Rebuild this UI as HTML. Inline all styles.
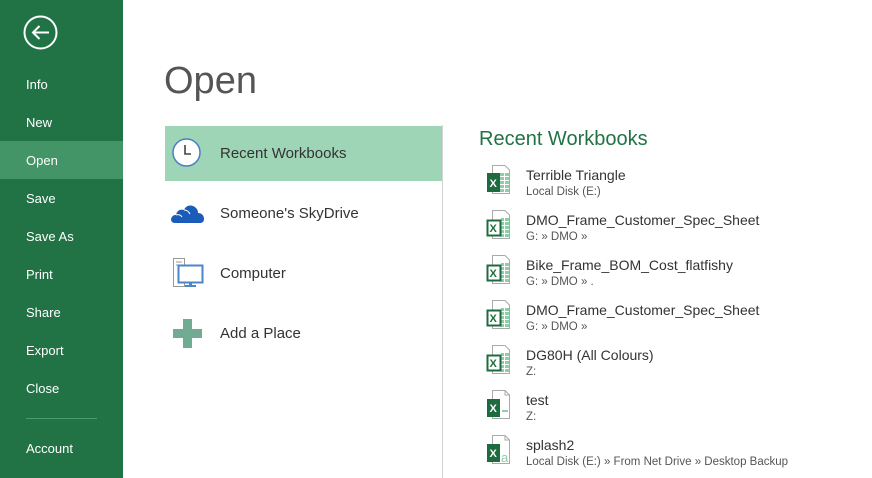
<!DOCTYPE html>
<html><head><meta charset="utf-8"><style>
*{margin:0;padding:0;box-sizing:border-box}
body{width:872px;height:478px;overflow:hidden;background:#fff;font-family:"Segoe UI","Liberation Sans",sans-serif;position:relative}
.side{position:absolute;left:0;top:0;width:123px;height:478px;background:#217346}
.mi{position:absolute;left:26px;color:#fff;font-size:13px;line-height:38px;height:38px}
.sel{position:absolute;left:0;top:141px;width:123px;height:38px;background:#439467}
.sep{position:absolute;left:26px;top:418px;width:71px;height:1px;background:#4d9a6e}
h1{position:absolute;left:164px;top:60px;font-size:38px;font-weight:normal;color:#555;}
.hl{position:absolute;left:165px;top:126px;width:277px;height:55px;background:#9fd5b7}
.vline{position:absolute;left:442px;top:125px;width:1px;height:353px;background:#d4d4d4}
.pl{position:absolute;left:220px;font-size:15px;color:#333}
.rh{position:absolute;left:479px;top:128px;font-size:20px;color:#217346}
.fn{position:absolute;left:526px;font-size:14px;color:#333;white-space:nowrap}
.fp{position:absolute;left:526px;font-size:11.5px;color:#555;white-space:nowrap}
.ic{position:absolute;left:486px}
</style></head><body>
<div class="side">
<svg style="position:absolute;left:23px;top:15px" width="36" height="36"><circle cx="17.5" cy="17.5" r="16" fill="none" stroke="#fff" stroke-width="2"/><path d="M10 17.5H26M16.5 11L10 17.5L16.5 24" fill="none" stroke="#fff" stroke-width="2"/></svg>
<div class="sel"></div>
<div class="mi" style="top:66px">Info</div>
<div class="mi" style="top:104px">New</div>
<div class="mi" style="top:142px">Open</div>
<div class="mi" style="top:180px">Save</div>
<div class="mi" style="top:218px">Save As</div>
<div class="mi" style="top:256px">Print</div>
<div class="mi" style="top:294px">Share</div>
<div class="mi" style="top:332px">Export</div>
<div class="mi" style="top:370px">Close</div>
<div class="sep"></div>
<div class="mi" style="top:430px">Account</div>
</div>
<h1>Open</h1>
<div class="hl"></div>
<div class="vline"></div>
<svg style="position:absolute;left:171px;top:138px" width="32" height="30"><circle cx="15.5" cy="14.5" r="13.5" fill="#fff" stroke="#4a7fc1" stroke-width="1.5"/><path d="M14 7V16H20" fill="none" stroke="#444" stroke-width="1.6"/></svg>
<div class="pl" style="top:145px">Recent Workbooks</div>
<svg style="position:absolute;left:170px;top:202px" width="35" height="22"><path d="M5 21C1 21 0 17 2 15C3 13 5 13 6 13C7 8 11 7 14 8C16 3 22 2 26 6C28 8 28 10 28 11C32 11 34 14 34 17C34 20 32 21 30 21Z" fill="#1a5cb8"/><path d="M6 13C8 12 11 13 12 15" fill="none" stroke="#fff" stroke-width="1"/><path d="M14 8C17 8 19 10 20 12" fill="none" stroke="#fff" stroke-width="1"/></svg>
<div class="pl" style="top:205px">Someone's SkyDrive</div>
<svg style="position:absolute;left:172px;top:257px" width="32" height="32"><rect x="1.5" y="1.5" width="11" height="28" fill="#fff" stroke="#999"/><path d="M4 5H10M4 8H10" stroke="#999"/><rect x="6.5" y="8.5" width="24" height="17" fill="#fff" stroke="#4a86c8" stroke-width="2"/><rect x="17" y="26" width="3" height="3" fill="#4a86c8"/><rect x="13" y="28" width="11" height="2" fill="#4a86c8"/></svg>
<div class="pl" style="top:265px">Computer</div>
<svg style="position:absolute;left:173px;top:319px" width="29" height="29"><path d="M10 0H19V10H29V19H19V29H10V19H0V10H10Z" fill="#72ab94"/></svg>
<div class="pl" style="top:325px">Add a Place</div>
<div class="rh">Recent Workbooks</div>

<svg class="ic" style="top:165px" width="26" height="30"><path d="M6.5 0.5H19L23.5 5V28.5H6.5Z" fill="#fff" stroke="#aaa"/><g fill="#8fcca8"><rect x="14" y="8" width="4" height="3"/><rect x="19" y="8" width="4" height="3"/><rect x="14" y="12" width="4" height="3"/><rect x="19" y="12" width="4" height="3"/><rect x="14" y="16" width="4" height="3"/><rect x="19" y="16" width="4" height="3"/><rect x="14" y="20" width="4" height="3"/><rect x="19" y="20" width="4" height="3"/><rect x="14" y="24" width="4" height="3"/><rect x="19" y="24" width="4" height="3"/></g><rect x="1" y="8" width="13" height="19" fill="#1d6b3e"/><text x="3.5" y="22" font-family="Liberation Sans" font-weight="bold" font-size="11" fill="#fff">X</text></svg>
<div class="fn" style="top:167px">Terrible Triangle</div><div class="fp" style="top:186px">Local Disk (E:)</div>

<svg class="ic" style="top:210px" width="26" height="30"><path d="M6.5 0.5H19L23.5 5V28.5H6.5Z" fill="#fff" stroke="#aaa"/><g fill="#8fcca8"><rect x="15" y="8" width="3" height="3"/><rect x="19" y="8" width="4" height="3"/><rect x="15" y="12" width="3" height="3"/><rect x="19" y="12" width="4" height="3"/><rect x="15" y="16" width="3" height="3"/><rect x="19" y="16" width="4" height="3"/><rect x="15" y="20" width="3" height="3"/><rect x="19" y="20" width="4" height="3"/><rect x="15" y="24" width="3" height="3"/><rect x="19" y="24" width="4" height="3"/></g><rect x="1.5" y="10.5" width="13" height="15" fill="#fff" stroke="#1d6b3e" stroke-width="2"/><text x="3.5" y="22" font-family="Liberation Sans" font-weight="bold" font-size="11" fill="#1d6b3e">X</text></svg>
<div class="fn" style="top:212px">DMO_Frame_Customer_Spec_Sheet</div><div class="fp" style="top:231px">G: » DMO »</div>

<svg class="ic" style="top:255px" width="26" height="30"><path d="M6.5 0.5H19L23.5 5V28.5H6.5Z" fill="#fff" stroke="#aaa"/><g fill="#8fcca8"><rect x="15" y="8" width="3" height="3"/><rect x="19" y="8" width="4" height="3"/><rect x="15" y="12" width="3" height="3"/><rect x="19" y="12" width="4" height="3"/><rect x="15" y="16" width="3" height="3"/><rect x="19" y="16" width="4" height="3"/><rect x="15" y="20" width="3" height="3"/><rect x="19" y="20" width="4" height="3"/><rect x="15" y="24" width="3" height="3"/><rect x="19" y="24" width="4" height="3"/></g><rect x="1.5" y="10.5" width="13" height="15" fill="#fff" stroke="#1d6b3e" stroke-width="2"/><text x="3.5" y="22" font-family="Liberation Sans" font-weight="bold" font-size="11" fill="#1d6b3e">X</text></svg>
<div class="fn" style="top:257px">Bike_Frame_BOM_Cost_flatfishy</div><div class="fp" style="top:276px">G: » DMO » .</div>

<svg class="ic" style="top:300px" width="26" height="30"><path d="M6.5 0.5H19L23.5 5V28.5H6.5Z" fill="#fff" stroke="#aaa"/><g fill="#8fcca8"><rect x="15" y="8" width="3" height="3"/><rect x="19" y="8" width="4" height="3"/><rect x="15" y="12" width="3" height="3"/><rect x="19" y="12" width="4" height="3"/><rect x="15" y="16" width="3" height="3"/><rect x="19" y="16" width="4" height="3"/><rect x="15" y="20" width="3" height="3"/><rect x="19" y="20" width="4" height="3"/><rect x="15" y="24" width="3" height="3"/><rect x="19" y="24" width="4" height="3"/></g><rect x="1.5" y="10.5" width="13" height="15" fill="#fff" stroke="#1d6b3e" stroke-width="2"/><text x="3.5" y="22" font-family="Liberation Sans" font-weight="bold" font-size="11" fill="#1d6b3e">X</text></svg>
<div class="fn" style="top:302px">DMO_Frame_Customer_Spec_Sheet</div><div class="fp" style="top:321px">G: » DMO »</div>

<svg class="ic" style="top:345px" width="26" height="30"><path d="M6.5 0.5H19L23.5 5V28.5H6.5Z" fill="#fff" stroke="#aaa"/><g fill="#8fcca8"><rect x="15" y="8" width="3" height="3"/><rect x="19" y="8" width="4" height="3"/><rect x="15" y="12" width="3" height="3"/><rect x="19" y="12" width="4" height="3"/><rect x="15" y="16" width="3" height="3"/><rect x="19" y="16" width="4" height="3"/><rect x="15" y="20" width="3" height="3"/><rect x="19" y="20" width="4" height="3"/><rect x="15" y="24" width="3" height="3"/><rect x="19" y="24" width="4" height="3"/></g><rect x="1.5" y="10.5" width="13" height="15" fill="#fff" stroke="#1d6b3e" stroke-width="2"/><text x="3.5" y="22" font-family="Liberation Sans" font-weight="bold" font-size="11" fill="#1d6b3e">X</text></svg>
<div class="fn" style="top:347px">DG80H (All Colours)</div><div class="fp" style="top:366px">Z:</div>

<svg class="ic" style="top:390px" width="26" height="30"><path d="M6.5 0.5H19L23.5 5V28.5H6.5Z" fill="#fff" stroke="#aaa"/><path d="M19 0.5V5H23.5" fill="none" stroke="#aaa"/><rect x="1" y="9" width="13" height="18" fill="#1d6b3e"/><text x="3.5" y="22" font-family="Liberation Sans" font-weight="bold" font-size="11" fill="#fff">X</text><rect x="16" y="20" width="6" height="2" fill="#8fcca8"/></svg>
<div class="fn" style="top:392px">test</div><div class="fp" style="top:411px">Z:</div>

<svg class="ic" style="top:435px" width="26" height="30"><path d="M6.5 0.5H19L23.5 5V28.5H6.5Z" fill="#fff" stroke="#aaa"/><path d="M19 0.5V5H23.5" fill="none" stroke="#aaa"/><rect x="1" y="9" width="13" height="18" fill="#1d6b3e"/><text x="3.5" y="22" font-family="Liberation Sans" font-weight="bold" font-size="11" fill="#fff">X</text><text x="15" y="27" font-family="Liberation Sans" font-size="13" fill="#8fcca8">a</text></svg>
<div class="fn" style="top:437px">splash2</div><div class="fp" style="top:456px">Local Disk (E:) » From Net Drive » Desktop Backup</div>
</body></html>
